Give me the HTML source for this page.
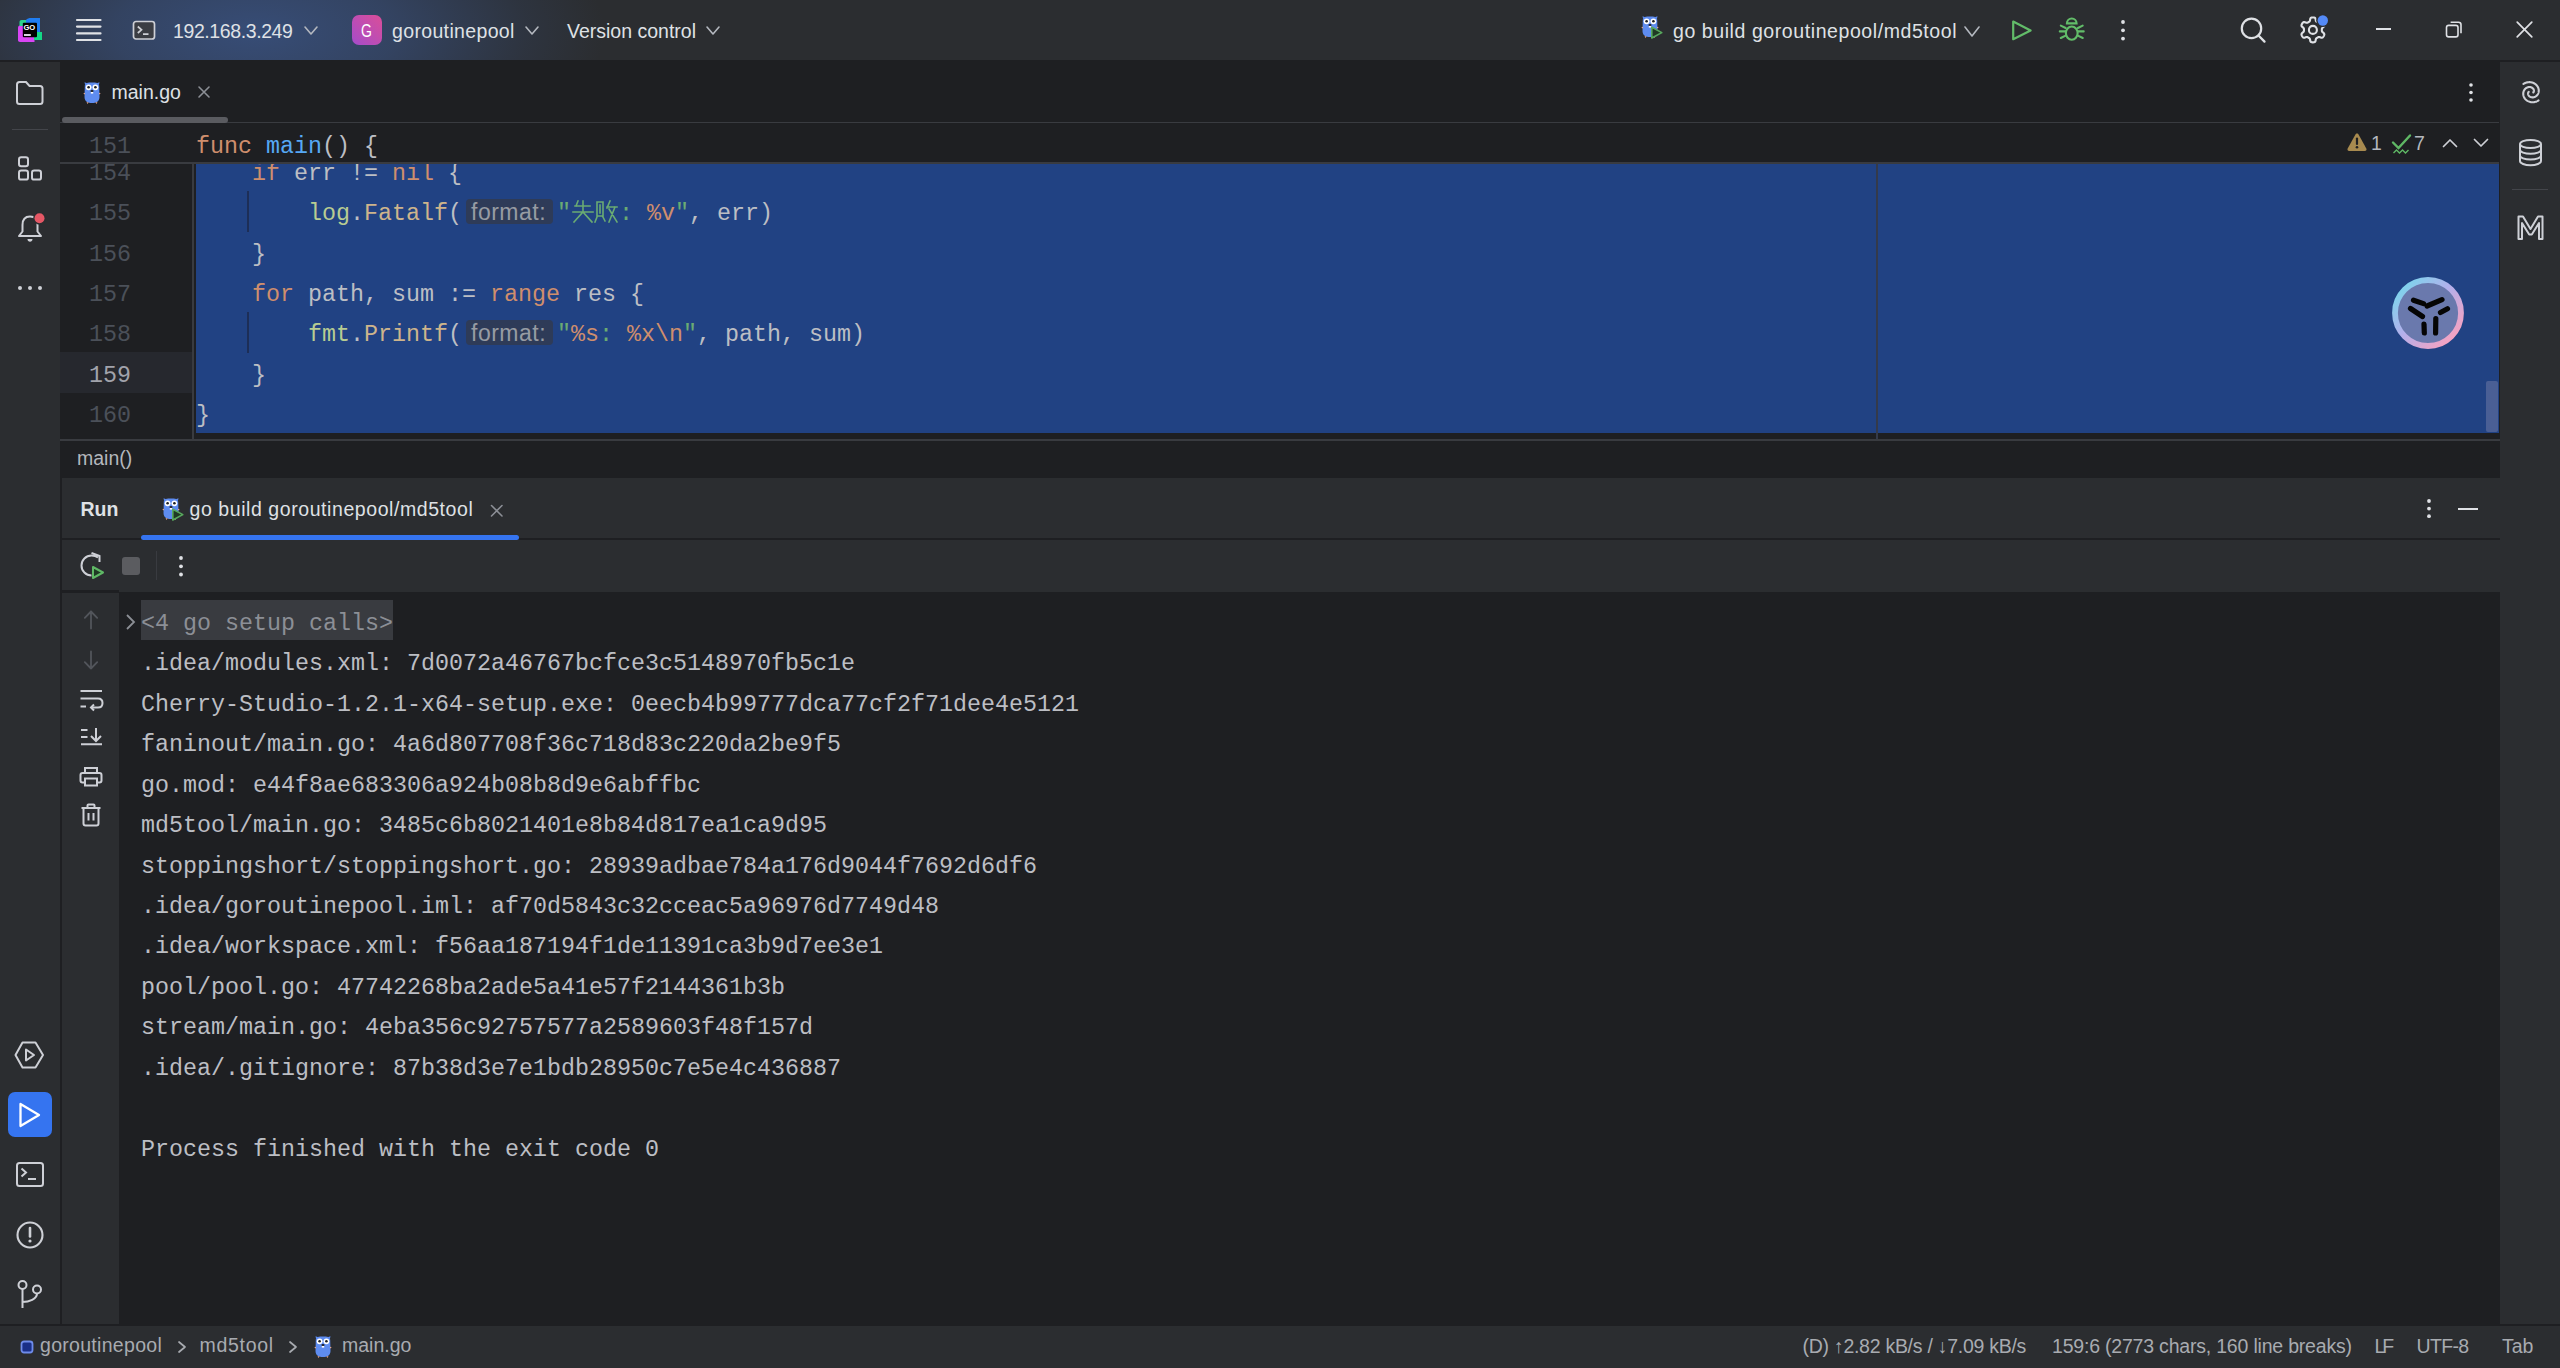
<!DOCTYPE html>
<html><head><meta charset="utf-8">
<style>
*{margin:0;padding:0;box-sizing:border-box}
html,body{width:2560px;height:1368px;overflow:hidden;background:#1E1F22}
body{position:relative;font-family:"Liberation Sans",sans-serif}
.a{position:absolute}
.t{white-space:pre}
svg.a{overflow:visible}
</style></head><body>
<div class="a" style="left:0px;top:0px;width:2560px;height:60px;background:#2B2D30;"></div>
<div class="a" style="left:0;top:0;width:2560px;height:60px;background:radial-gradient(ellipse 350px 150px at 255px 32px, rgba(57,82,130,0.86) 0%, rgba(57,82,130,0.6) 40%, rgba(57,82,130,0.18) 78%, rgba(57,82,130,0) 100%)"></div>
<div class="a" style="left:0px;top:60px;width:60px;height:1264px;background:#2B2D30;"></div>
<div class="a" style="left:2500px;top:60px;width:60px;height:1264px;background:#2B2D30;"></div>
<div class="a" style="left:60px;top:60px;width:2440px;height:1264px;background:#1E1F22;"></div>
<div class="a" style="left:0px;top:60px;width:2560px;height:1.5px;background:#1E1F22;"></div>
<div class="a" style="left:60px;top:122px;width:2439px;height:2px;background:#393B40;"></div>
<div class="a" style="left:60px;top:162px;width:2439px;height:2px;background:#393B40;"></div>
<div class="a" style="left:60px;top:439px;width:2440px;height:2px;background:#393B40;"></div>
<div class="a" style="left:60px;top:478px;width:2440px;height:846px;background:#2B2D30;"></div>
<div class="a" style="left:60px;top:538px;width:2440px;height:2px;background:#1E1F22;"></div>
<div class="a" style="left:119px;top:592px;width:2381px;height:732px;background:#1E1F22;"></div>
<div class="a" style="left:62px;top:590px;width:57px;height:3px;background:#1E1F22;"></div>
<div class="a" style="left:0px;top:1324px;width:2560px;height:2px;background:#1E1F22;"></div>
<div class="a" style="left:0px;top:1326px;width:2560px;height:42px;background:#2B2D30;"></div>
<div class="a" style="left:60px;top:352.4px;width:133px;height:40.3px;background:#26282E;"></div>
<div class="a" style="left:192px;top:164px;width:2px;height:275px;background:#393B40;"></div>
<div class="a" style="left:196px;top:164px;width:2303px;height:269px;background:#214283;"></div>
<div class="a" style="left:1876px;top:164px;width:2px;height:275px;background:#343A4A;"></div>
<div class="a" style="left:247px;top:191px;width:2px;height:41px;background:#1D2E57;"></div>
<div class="a" style="left:247px;top:312px;width:2px;height:41px;background:#1D2E57;"></div>
<div class="a t" style="left:89px;top:154.19px;font-family:'Liberation Mono',monospace;font-size:23.33px;line-height:40px;color:#4B5059;font-weight:normal;">154</div>
<div class="a t" style="left:89px;top:194.49px;font-family:'Liberation Mono',monospace;font-size:23.33px;line-height:40px;color:#4B5059;font-weight:normal;">155</div>
<div class="a t" style="left:89px;top:234.79px;font-family:'Liberation Mono',monospace;font-size:23.33px;line-height:40px;color:#4B5059;font-weight:normal;">156</div>
<div class="a t" style="left:89px;top:275.09px;font-family:'Liberation Mono',monospace;font-size:23.33px;line-height:40px;color:#4B5059;font-weight:normal;">157</div>
<div class="a t" style="left:89px;top:315.39px;font-family:'Liberation Mono',monospace;font-size:23.33px;line-height:40px;color:#4B5059;font-weight:normal;">158</div>
<div class="a t" style="left:89px;top:355.69px;font-family:'Liberation Mono',monospace;font-size:23.33px;line-height:40px;color:#A1A3AB;font-weight:normal;">159</div>
<div class="a t" style="left:89px;top:395.99px;font-family:'Liberation Mono',monospace;font-size:23.33px;line-height:40px;color:#4B5059;font-weight:normal;">160</div>
<div class="a t" style="left:252px;top:154.19px;font-family:'Liberation Mono',monospace;font-size:23.33px;line-height:40px;color:#CF8E6D;font-weight:normal;">if</div>
<div class="a t" style="left:280.0px;top:154.19px;font-family:'Liberation Mono',monospace;font-size:23.33px;line-height:40px;color:#BCBEC4;font-weight:normal;"> err != </div>
<div class="a t" style="left:392.0px;top:154.19px;font-family:'Liberation Mono',monospace;font-size:23.33px;line-height:40px;color:#CF8E6D;font-weight:normal;">nil</div>
<div class="a t" style="left:434.0px;top:154.19px;font-family:'Liberation Mono',monospace;font-size:23.33px;line-height:40px;color:#BCBEC4;font-weight:normal;"> {</div>
<div class="a t" style="left:308px;top:194.49px;font-family:'Liberation Mono',monospace;font-size:23.33px;line-height:40px;color:#B8CC92;font-weight:normal;">log</div>
<div class="a t" style="left:350.0px;top:194.49px;font-family:'Liberation Mono',monospace;font-size:23.33px;line-height:40px;color:#BCBEC4;font-weight:normal;">.</div>
<div class="a t" style="left:364.0px;top:194.49px;font-family:'Liberation Mono',monospace;font-size:23.33px;line-height:40px;color:#CDB48C;font-weight:normal;">Fatalf</div>
<div class="a t" style="left:448.0px;top:194.49px;font-family:'Liberation Mono',monospace;font-size:23.33px;line-height:40px;color:#BCBEC4;font-weight:normal;">(</div>
<div class="a" style="left:466.0px;top:198.7px;width:87px;height:25px;background:#2E3B58;border-radius:4px"></div>
<div class="a t" style="left:471.0px;top:195.63px;font-family:'Liberation Sans',sans-serif;font-size:23px;line-height:32.2px;color:#979BA3;font-weight:normal;letter-spacing:0.5px">format:</div>
<div class="a t" style="left:557.0px;top:194.49px;font-family:'Liberation Mono',monospace;font-size:23.33px;line-height:40px;color:#6AAB73;font-weight:normal;">"</div>
<div class="a" style="left:571.0px;top:198.70000000000002px;width:48px;height:28px"><svg width="48" height="28" viewBox="0 0 48 28" style="position:absolute;left:0;top:0" fill="none" stroke="#6AAB73" stroke-width="1.6" stroke-linecap="square"><path d="M7 2 L5 7 M4 7 H19 M12 2 V13 M2 13 H22 M12 13 L3 23 M12 13 L21 23"/><path d="M26 3 H32 V17 H26 Z M29 6 V14 M26 18 L24 23 M32 18 L34 22 M39 2 L36 9 M36 8 H46 M44 8 L38 23 M38 10 L46 23"/></svg></div>
<div class="a t" style="left:619.0px;top:194.49px;font-family:'Liberation Mono',monospace;font-size:23.33px;line-height:40px;color:#6AAB73;font-weight:normal;">: </div>
<div class="a t" style="left:647.0px;top:194.49px;font-family:'Liberation Mono',monospace;font-size:23.33px;line-height:40px;color:#CF8E6D;font-weight:normal;">%v</div>
<div class="a t" style="left:675.0px;top:194.49px;font-family:'Liberation Mono',monospace;font-size:23.33px;line-height:40px;color:#6AAB73;font-weight:normal;">"</div>
<div class="a t" style="left:689.0px;top:194.49px;font-family:'Liberation Mono',monospace;font-size:23.33px;line-height:40px;color:#BCBEC4;font-weight:normal;">, err)</div>
<div class="a t" style="left:252px;top:234.79px;font-family:'Liberation Mono',monospace;font-size:23.33px;line-height:40px;color:#BCBEC4;font-weight:normal;">}</div>
<div class="a t" style="left:252px;top:275.09px;font-family:'Liberation Mono',monospace;font-size:23.33px;line-height:40px;color:#CF8E6D;font-weight:normal;">for</div>
<div class="a t" style="left:294.0px;top:275.09px;font-family:'Liberation Mono',monospace;font-size:23.33px;line-height:40px;color:#BCBEC4;font-weight:normal;"> path, sum := </div>
<div class="a t" style="left:490.0px;top:275.09px;font-family:'Liberation Mono',monospace;font-size:23.33px;line-height:40px;color:#CF8E6D;font-weight:normal;">range</div>
<div class="a t" style="left:560.0px;top:275.09px;font-family:'Liberation Mono',monospace;font-size:23.33px;line-height:40px;color:#BCBEC4;font-weight:normal;"> res {</div>
<div class="a t" style="left:308px;top:315.39px;font-family:'Liberation Mono',monospace;font-size:23.33px;line-height:40px;color:#B8CC92;font-weight:normal;">fmt</div>
<div class="a t" style="left:350.0px;top:315.39px;font-family:'Liberation Mono',monospace;font-size:23.33px;line-height:40px;color:#BCBEC4;font-weight:normal;">.</div>
<div class="a t" style="left:364.0px;top:315.39px;font-family:'Liberation Mono',monospace;font-size:23.33px;line-height:40px;color:#CDB48C;font-weight:normal;">Printf</div>
<div class="a t" style="left:448.0px;top:315.39px;font-family:'Liberation Mono',monospace;font-size:23.33px;line-height:40px;color:#BCBEC4;font-weight:normal;">(</div>
<div class="a" style="left:466.0px;top:319.6px;width:87px;height:25px;background:#2E3B58;border-radius:4px"></div>
<div class="a t" style="left:471.0px;top:316.53px;font-family:'Liberation Sans',sans-serif;font-size:23px;line-height:32.2px;color:#979BA3;font-weight:normal;letter-spacing:0.5px">format:</div>
<div class="a t" style="left:557.0px;top:315.39px;font-family:'Liberation Mono',monospace;font-size:23.33px;line-height:40px;color:#6AAB73;font-weight:normal;">"</div>
<div class="a t" style="left:571.0px;top:315.39px;font-family:'Liberation Mono',monospace;font-size:23.33px;line-height:40px;color:#CF8E6D;font-weight:normal;">%s</div>
<div class="a t" style="left:599.0px;top:315.39px;font-family:'Liberation Mono',monospace;font-size:23.33px;line-height:40px;color:#6AAB73;font-weight:normal;">: </div>
<div class="a t" style="left:627.0px;top:315.39px;font-family:'Liberation Mono',monospace;font-size:23.33px;line-height:40px;color:#CF8E6D;font-weight:normal;">%x</div>
<div class="a t" style="left:655.0px;top:315.39px;font-family:'Liberation Mono',monospace;font-size:23.33px;line-height:40px;color:#CF8E6D;font-weight:normal;">\n</div>
<div class="a t" style="left:683.0px;top:315.39px;font-family:'Liberation Mono',monospace;font-size:23.33px;line-height:40px;color:#6AAB73;font-weight:normal;">"</div>
<div class="a t" style="left:697.0px;top:315.39px;font-family:'Liberation Mono',monospace;font-size:23.33px;line-height:40px;color:#BCBEC4;font-weight:normal;">, path, sum)</div>
<div class="a t" style="left:252px;top:355.69px;font-family:'Liberation Mono',monospace;font-size:23.33px;line-height:40px;color:#BCBEC4;font-weight:normal;">}</div>
<div class="a t" style="left:196px;top:395.99px;font-family:'Liberation Mono',monospace;font-size:23.33px;line-height:40px;color:#BCBEC4;font-weight:normal;">}</div>
<div class="a" style="left:60px;top:123px;width:2439px;height:39px;background:#1E1F22;"></div>
<div class="a" style="left:60px;top:162px;width:2439px;height:2px;background:#393B40;"></div>
<div class="a t" style="left:89px;top:126.59px;font-family:'Liberation Mono',monospace;font-size:23.33px;line-height:40px;color:#4B5059;font-weight:normal;">151</div>
<div class="a t" style="left:196px;top:126.59px;font-family:'Liberation Mono',monospace;font-size:23.33px;line-height:40px;color:#CF8E6D;font-weight:normal;">func</div>
<div class="a t" style="left:252.0px;top:126.59px;font-family:'Liberation Mono',monospace;font-size:23.33px;line-height:40px;color:#BCBEC4;font-weight:normal;"> </div>
<div class="a t" style="left:266.0px;top:126.59px;font-family:'Liberation Mono',monospace;font-size:23.33px;line-height:40px;color:#56A8F5;font-weight:normal;">main</div>
<div class="a t" style="left:322.0px;top:126.59px;font-family:'Liberation Mono',monospace;font-size:23.33px;line-height:40px;color:#BCBEC4;font-weight:normal;">() {</div>
<div class="a" style="left:141px;top:600px;width:252px;height:40px;background:#393B40;"></div>
<div class="a t" style="left:141px;top:603.89px;font-family:'Liberation Mono',monospace;font-size:23.33px;line-height:40px;color:#8C8F96;font-weight:normal;">&lt;4 go setup calls&gt;</div>
<svg class="a" style="left:124px;top:612px;" width="14" height="20" viewBox="0 0 14 20"><path d="M3 3 L10 10 L3 17" stroke="#8C8F96" stroke-width="1.8" fill="none"/></svg>
<div class="a t" style="left:141px;top:644.33px;font-family:'Liberation Mono',monospace;font-size:23.33px;line-height:40px;color:#BCBEC4;font-weight:normal;">.idea/modules.xml: 7d0072a46767bcfce3c5148970fb5c1e</div>
<div class="a t" style="left:141px;top:684.77px;font-family:'Liberation Mono',monospace;font-size:23.33px;line-height:40px;color:#BCBEC4;font-weight:normal;">Cherry-Studio-1.2.1-x64-setup.exe: 0eecb4b99777dca77cf2f71dee4e5121</div>
<div class="a t" style="left:141px;top:725.21px;font-family:'Liberation Mono',monospace;font-size:23.33px;line-height:40px;color:#BCBEC4;font-weight:normal;">faninout/main.go: 4a6d807708f36c718d83c220da2be9f5</div>
<div class="a t" style="left:141px;top:765.65px;font-family:'Liberation Mono',monospace;font-size:23.33px;line-height:40px;color:#BCBEC4;font-weight:normal;">go.mod: e44f8ae683306a924b08b8d9e6abffbc</div>
<div class="a t" style="left:141px;top:806.09px;font-family:'Liberation Mono',monospace;font-size:23.33px;line-height:40px;color:#BCBEC4;font-weight:normal;">md5tool/main.go: 3485c6b8021401e8b84d817ea1ca9d95</div>
<div class="a t" style="left:141px;top:846.53px;font-family:'Liberation Mono',monospace;font-size:23.33px;line-height:40px;color:#BCBEC4;font-weight:normal;">stoppingshort/stoppingshort.go: 28939adbae784a176d9044f7692d6df6</div>
<div class="a t" style="left:141px;top:886.97px;font-family:'Liberation Mono',monospace;font-size:23.33px;line-height:40px;color:#BCBEC4;font-weight:normal;">.idea/goroutinepool.iml: af70d5843c32cceac5a96976d7749d48</div>
<div class="a t" style="left:141px;top:927.41px;font-family:'Liberation Mono',monospace;font-size:23.33px;line-height:40px;color:#BCBEC4;font-weight:normal;">.idea/workspace.xml: f56aa187194f1de11391ca3b9d7ee3e1</div>
<div class="a t" style="left:141px;top:967.85px;font-family:'Liberation Mono',monospace;font-size:23.33px;line-height:40px;color:#BCBEC4;font-weight:normal;">pool/pool.go: 47742268ba2ade5a41e57f2144361b3b</div>
<div class="a t" style="left:141px;top:1008.29px;font-family:'Liberation Mono',monospace;font-size:23.33px;line-height:40px;color:#BCBEC4;font-weight:normal;">stream/main.go: 4eba356c92757577a2589603f48f157d</div>
<div class="a t" style="left:141px;top:1048.73px;font-family:'Liberation Mono',monospace;font-size:23.33px;line-height:40px;color:#BCBEC4;font-weight:normal;">.idea/.gitignore: 87b38d3e7e1bdb28950c7e5e4c436887</div>
<div class="a t" style="left:141px;top:1129.61px;font-family:'Liberation Mono',monospace;font-size:23.33px;line-height:40px;color:#BCBEC4;font-weight:normal;">Process finished with the exit code 0</div>
<svg class="a" style="left:0px;top:0px;" width="50" height="50" viewBox="0 0 50 50"><path d="M18 28 C18 26.3 19 25.3 20.5 25.3 H34.5 V42 H20 C18.8 42 18 41.2 18 40 Z" fill="#D945F5"/><path d="M19.5 22 C19.5 20.8 20.3 20 21.5 20 H27 V26 H19.5 Z" fill="#2BD38F"/><path d="M27 19 L29.5 18 H40 V32 H26 V20 Z" fill="#1F7DF2"/><path d="M34 32 H42 V40 H34 Z" fill="#14D886"/><rect x="22.8" y="22.8" width="14.2" height="14.4" rx="1" fill="#000"/><text x="23.6" y="30" font-family="Liberation Sans" font-weight="bold" font-size="7.6" fill="#fff" letter-spacing="-0.3">GO</text><rect x="24" y="34" width="6.8" height="2" fill="#D8D0E0"/></svg>
<svg class="a" style="left:76px;top:18px;" width="26" height="24" viewBox="0 0 26 24"><path d="M1 2 H24.5 M1 8.6 H24.5 M1 15.4 H24.5 M1 22 H24.5" stroke="#DFE1E5" stroke-width="2.2" stroke-linecap="round"/></svg>
<svg class="a" style="left:132px;top:20px;" width="24" height="21" viewBox="0 0 24 21"><rect x="1.5" y="1.5" width="21" height="17.5" rx="2.5" fill="#3B3D43" stroke="#CED0D6" stroke-width="1.7"/><path d="M5.8 6.5 L9.5 9.8 L5.8 13 M11 14.2 H16.5" fill="none" stroke="#CED0D6" stroke-width="1.7"/></svg>
<div class="a t" style="left:173px;top:17.59px;font-family:'Liberation Sans',sans-serif;font-size:19.5px;line-height:27.3px;color:#DFE1E5;font-weight:normal;letter-spacing:-0.4px">192.168.3.249</div>
<svg class="a" style="left:304px;top:26px;" width="14" height="9" viewBox="0 0 14 9"><path d="M1 1 L7.0 8.0 L13.0 1" fill="none" stroke="#B4B8BF" stroke-width="1.6" stroke-linecap="round" stroke-linejoin="round"/></svg>
<div class="a" style="left:352px;top:15px;width:30px;height:30px;border-radius:7px;background:linear-gradient(45deg,#A54CCB,#DA4E98)"></div>
<div class="a t" style="left:360.5px;top:18.56px;font-family:'Liberation Sans',sans-serif;font-size:18px;line-height:25.2px;color:#FFFFFF;font-weight:normal;transform:scaleX(0.78);transform-origin:0 0">G</div>
<div class="a t" style="left:392px;top:17.59px;font-family:'Liberation Sans',sans-serif;font-size:19.5px;line-height:27.3px;color:#DFE1E5;font-weight:normal;letter-spacing:0.35px">goroutinepool</div>
<svg class="a" style="left:525px;top:26px;" width="14" height="9" viewBox="0 0 14 9"><path d="M1 1 L7.0 8.0 L13.0 1" fill="none" stroke="#B4B8BF" stroke-width="1.6" stroke-linecap="round" stroke-linejoin="round"/></svg>
<div class="a t" style="left:567px;top:17.59px;font-family:'Liberation Sans',sans-serif;font-size:19.5px;line-height:27.3px;color:#DFE1E5;font-weight:normal;">Version control</div>
<svg class="a" style="left:706px;top:26px;" width="14" height="9" viewBox="0 0 14 9"><path d="M1 1 L7.0 8.0 L13.0 1" fill="none" stroke="#B4B8BF" stroke-width="1.6" stroke-linecap="round" stroke-linejoin="round"/></svg>
<svg class="a" style="left:1640px;top:15px;" width="30" height="30" viewBox="0 0 30 30"><g transform="scale(1.0)"><path d="M3 3.5 L2.5 1.2 L6 2.6 Z M17 3.5 L17.5 1.2 L14 2.6 Z" fill="#5E8CF0"/><path d="M2.8 5 C2.8 1.8 6 1.5 10 1.5 C14 1.5 17.2 1.8 17.2 5 L17.5 16 C17.5 20.5 14 22 10 22 C6 22 2.5 20.5 2.5 16 Z" fill="#5E8CF0"/><circle cx="6.6" cy="6.3" r="2.9" fill="#fff"/><circle cx="13.4" cy="6.3" r="2.9" fill="#fff"/><circle cx="6.6" cy="6.3" r="1.3" fill="#1E1F22"/><circle cx="13.4" cy="6.3" r="1.3" fill="#1E1F22"/><ellipse cx="10" cy="10" rx="1.6" ry="1.1" fill="#1E1F22"/><path d="M8.8 11 H11.2 V12.6 H8.8Z" fill="#fff"/><path d="M1.2 12.5 L3 11.8 L3 13.6Z M18.8 12.5 L17 11.8 L17 13.6Z M4.5 21.5 L6.5 21 L5.8 23Z M15.5 21.5 L13.5 21 L14.2 23Z" fill="#E8A88F"/></g><path d="M11.8 12.2 L21.8 17.6 L11.8 23.0 Z" fill="#1F3A24" stroke="#58A85E" stroke-width="1.6" stroke-linejoin="round"/></svg>
<div class="a t" style="left:1673px;top:17.79px;font-family:'Liberation Sans',sans-serif;font-size:19.5px;line-height:27.3px;color:#DFE1E5;font-weight:normal;letter-spacing:0.58px">go build goroutinepool/md5tool</div>
<svg class="a" style="left:1964px;top:26px;" width="16" height="11" viewBox="0 0 16 11"><path d="M1 1 L8.0 10.0 L15.0 1" fill="none" stroke="#B4B8BF" stroke-width="1.6" stroke-linecap="round" stroke-linejoin="round"/></svg>
<svg class="a" style="left:2010px;top:19px;" width="24" height="24" viewBox="0 0 24 24"><path d="M3.2 2.6 L20.6 11.4 L3.2 20.2 Z" fill="none" stroke="#62BC69" stroke-width="2.2" stroke-linejoin="round"/></svg>
<svg class="a" style="left:2057px;top:17px;" width="30" height="26" viewBox="0 0 30 26"><g fill="none" stroke="#62BC69" stroke-width="2.1" stroke-linecap="round"><path d="M9.9 6.4 A4.85 4.85 0 0 1 19.6 6.4 Z"/><ellipse cx="14.75" cy="16.1" rx="5.9" ry="6.6"/><path d="M3.8 8.6 L8.6 11 M2.8 14.4 H8.5 M3.8 21 L8.6 18.6 M25.7 8.6 L20.9 11 M26.7 14.4 H21 M25.7 21 L20.9 18.6"/></g></svg>
<svg class="a" style="left:2116.5px;top:17.7px;" width="12" height="24.599999999999998" viewBox="0 0 12 24.599999999999998"><circle cx="6" cy="4.0" r="1.9" fill="#DFE1E5"/><circle cx="6" cy="12.3" r="1.9" fill="#DFE1E5"/><circle cx="6" cy="20.6" r="1.9" fill="#DFE1E5"/></svg>
<svg class="a" style="left:2238px;top:16px;" width="32" height="30" viewBox="0 0 32 30"><circle cx="13.5" cy="12.4" r="9.7" fill="none" stroke="#DFE1E5" stroke-width="2.2"/><path d="M20.5 19.5 L26.5 25.6" stroke="#DFE1E5" stroke-width="2.3" stroke-linecap="round"/></svg>
<svg class="a" style="left:2297px;top:15px;" width="34" height="32" viewBox="0 0 34 32"><path d="M15.90 2.45 L16.33 2.46 L16.77 2.50 L17.20 2.57 L17.61 2.71 L18.01 2.95 L18.35 3.40 L18.59 4.12 L18.74 5.00 L18.88 5.73 L19.07 6.19 L19.30 6.48 L19.56 6.67 L19.83 6.84 L20.10 6.99 L20.38 7.15 L20.65 7.31 L20.92 7.46 L21.19 7.61 L21.49 7.74 L21.85 7.80 L22.35 7.74 L23.05 7.49 L23.89 7.19 L24.64 7.03 L25.20 7.10 L25.60 7.32 L25.93 7.61 L26.21 7.95 L26.45 8.30 L26.68 8.68 L26.89 9.06 L27.07 9.45 L27.22 9.86 L27.32 10.29 L27.30 10.75 L27.09 11.27 L26.58 11.84 L25.89 12.41 L25.33 12.90 L25.02 13.29 L24.90 13.64 L24.86 13.96 L24.85 14.27 L24.85 14.59 L24.85 14.90 L24.85 15.21 L24.85 15.53 L24.86 15.84 L24.90 16.16 L25.02 16.51 L25.33 16.90 L25.89 17.39 L26.58 17.96 L27.09 18.53 L27.30 19.05 L27.32 19.51 L27.22 19.94 L27.07 20.35 L26.89 20.74 L26.68 21.12 L26.45 21.50 L26.21 21.85 L25.93 22.19 L25.60 22.48 L25.20 22.70 L24.64 22.77 L23.89 22.61 L23.05 22.31 L22.35 22.06 L21.85 22.00 L21.49 22.06 L21.19 22.19 L20.92 22.34 L20.65 22.49 L20.38 22.65 L20.10 22.81 L19.83 22.96 L19.56 23.13 L19.30 23.32 L19.07 23.61 L18.88 24.07 L18.74 24.80 L18.59 25.68 L18.35 26.40 L18.01 26.85 L17.61 27.09 L17.20 27.23 L16.77 27.30 L16.33 27.34 L15.90 27.35 L15.47 27.34 L15.03 27.30 L14.60 27.23 L14.19 27.09 L13.79 26.85 L13.45 26.40 L13.21 25.68 L13.06 24.80 L12.92 24.07 L12.73 23.61 L12.50 23.32 L12.24 23.13 L11.97 22.96 L11.70 22.81 L11.42 22.65 L11.15 22.49 L10.88 22.34 L10.61 22.19 L10.31 22.06 L9.95 22.00 L9.45 22.06 L8.75 22.31 L7.91 22.61 L7.16 22.77 L6.60 22.70 L6.20 22.48 L5.87 22.19 L5.59 21.85 L5.35 21.50 L5.12 21.13 L4.91 20.74 L4.73 20.35 L4.58 19.94 L4.48 19.51 L4.50 19.05 L4.71 18.53 L5.22 17.96 L5.91 17.39 L6.47 16.90 L6.78 16.51 L6.90 16.16 L6.94 15.84 L6.95 15.53 L6.95 15.21 L6.95 14.90 L6.95 14.59 L6.95 14.27 L6.94 13.96 L6.90 13.64 L6.78 13.29 L6.47 12.90 L5.91 12.41 L5.22 11.84 L4.71 11.27 L4.50 10.75 L4.48 10.29 L4.58 9.86 L4.73 9.45 L4.91 9.06 L5.12 8.67 L5.35 8.30 L5.59 7.95 L5.87 7.61 L6.20 7.32 L6.60 7.10 L7.16 7.03 L7.91 7.19 L8.75 7.49 L9.45 7.74 L9.95 7.80 L10.31 7.74 L10.61 7.61 L10.88 7.46 L11.15 7.31 L11.42 7.15 L11.70 6.99 L11.97 6.84 L12.24 6.67 L12.50 6.48 L12.73 6.19 L12.92 5.73 L13.06 5.00 L13.21 4.12 L13.45 3.40 L13.79 2.95 L14.19 2.71 L14.60 2.57 L15.03 2.50 L15.47 2.46Z" fill="none" stroke="#DFE1E5" stroke-width="2.1" stroke-linejoin="round"/><circle cx="15.9" cy="14.9" r="4" fill="none" stroke="#DFE1E5" stroke-width="2.1"/><circle cx="25.8" cy="5.5" r="6.6" fill="#2B2D30"/><circle cx="25.8" cy="5.5" r="5.2" fill="#548AF7"/></svg>
<div class="a" style="left:2376px;top:27.9px;width:15px;height:1.7px;background:#DFE1E5;"></div>
<svg class="a" style="left:2444px;top:20px;" width="20" height="20" viewBox="0 0 20 20"><rect x="2.5" y="5.4" width="11.5" height="11.5" rx="2.2" fill="none" stroke="#DFE1E5" stroke-width="1.6"/><path d="M6.6 2.3 H14.5 C16 2.3 17 3.3 17 4.8 V13.2" fill="none" stroke="#DFE1E5" stroke-width="1.6"/></svg>
<svg class="a" style="left:2514px;top:19px;" width="22" height="22" viewBox="0 0 22 22"><path d="M3.2 3.2 L17.8 17.8 M17.8 3.2 L3.2 17.8" stroke="#DFE1E5" stroke-width="1.7" stroke-linecap="round"/></svg>
<svg class="a" style="left:82px;top:81px;" width="30" height="30" viewBox="0 0 30 30"><g transform="scale(1.0)"><path d="M3 3.5 L2.5 1.2 L6 2.6 Z M17 3.5 L17.5 1.2 L14 2.6 Z" fill="#5E8CF0"/><path d="M2.8 5 C2.8 1.8 6 1.5 10 1.5 C14 1.5 17.2 1.8 17.2 5 L17.5 16 C17.5 20.5 14 22 10 22 C6 22 2.5 20.5 2.5 16 Z" fill="#5E8CF0"/><circle cx="6.6" cy="6.3" r="2.9" fill="#fff"/><circle cx="13.4" cy="6.3" r="2.9" fill="#fff"/><circle cx="6.6" cy="6.3" r="1.3" fill="#1E1F22"/><circle cx="13.4" cy="6.3" r="1.3" fill="#1E1F22"/><ellipse cx="10" cy="10" rx="1.6" ry="1.1" fill="#1E1F22"/><path d="M8.8 11 H11.2 V12.6 H8.8Z" fill="#fff"/><path d="M1.2 12.5 L3 11.8 L3 13.6Z M18.8 12.5 L17 11.8 L17 13.6Z M4.5 21.5 L6.5 21 L5.8 23Z M15.5 21.5 L13.5 21 L14.2 23Z" fill="#E8A88F"/></g></svg>
<div class="a t" style="left:111.5px;top:78.59px;font-family:'Liberation Sans',sans-serif;font-size:19.5px;line-height:27.3px;color:#DFE1E5;font-weight:normal;">main.go</div>
<svg class="a" style="left:197px;top:85px;" width="14" height="14" viewBox="0 0 14 14"><path d="M2 2 L12 12 M12 2 L2 12" stroke="#8C8F96" stroke-width="1.6" stroke-linecap="round"/></svg>
<div class="a" style="left:62px;top:117px;width:166px;height:6px;background:#5A5B60;border-radius:3px"></div>
<svg class="a" style="left:2465px;top:80.5px;" width="12" height="23.0" viewBox="0 0 12 23.0"><circle cx="6" cy="4.0" r="1.8" fill="#DFE1E5"/><circle cx="6" cy="11.5" r="1.8" fill="#DFE1E5"/><circle cx="6" cy="19.0" r="1.8" fill="#DFE1E5"/></svg>
<svg class="a" style="left:2347px;top:132px;" width="22" height="20" viewBox="0 0 22 20"><path d="M10 1.5 C10.8 1.5 11.3 2 11.7 2.7 L19.3 16.5 C20 17.8 19.2 19 17.8 19 H2.2 C0.8 19 0 17.8 0.7 16.5 L8.3 2.7 C8.7 2 9.2 1.5 10 1.5Z" fill="#A88A4F"/><path d="M10 6.5 V12" stroke="#1E1F22" stroke-width="2.2" stroke-linecap="round"/><circle cx="10" cy="15.3" r="1.3" fill="#1E1F22"/></svg>
<div class="a t" style="left:2371px;top:130.09px;font-family:'Liberation Sans',sans-serif;font-size:19.5px;line-height:27.3px;color:#B4B8BF;font-weight:normal;">1</div>
<svg class="a" style="left:2391px;top:133px;" width="24" height="22" viewBox="0 0 24 22"><path d="M2 9.5 L7.5 15 L19 2.5" fill="none" stroke="#5FB865" stroke-width="2.4" stroke-linecap="round"/><path d="M2.5 20 L5.5 17 L8.5 20 L11.5 17 L14.5 20 L17.5 17" fill="none" stroke="#5FB865" stroke-width="1.4"/></svg>
<div class="a t" style="left:2414px;top:130.09px;font-family:'Liberation Sans',sans-serif;font-size:19.5px;line-height:27.3px;color:#B4B8BF;font-weight:normal;">7</div>
<svg class="a" style="left:2442px;top:138px;" width="16" height="10" viewBox="0 0 16 10"><path d="M1.5 8.5 L8 2 L14.5 8.5" fill="none" stroke="#CED0D6" stroke-width="1.7" stroke-linecap="round" stroke-linejoin="round"/></svg>
<svg class="a" style="left:2473px;top:138px;" width="16" height="10" viewBox="0 0 16 10"><path d="M1.5 1.5 L8 8 L14.5 1.5" fill="none" stroke="#CED0D6" stroke-width="1.7" stroke-linecap="round" stroke-linejoin="round"/></svg>
<div class="a" style="left:2486px;top:381px;width:12px;height:51px;background:#4A5F95;border-radius:2px"></div>
<svg class="a" style="left:2390px;top:275px;" width="76" height="76" viewBox="0 0 76 76"><defs><linearGradient id="aig" x1="0.1" y1="0.1" x2="0.9" y2="0.9"><stop offset="0" stop-color="#7ED3EC"/><stop offset="0.45" stop-color="#B3B0EC"/><stop offset="1" stop-color="#F7A2C0"/></linearGradient></defs><circle cx="38" cy="38" r="33" fill="#6A79AD" stroke="url(#aig)" stroke-width="5.8"/><g stroke="#050505" stroke-width="5.2" stroke-linecap="round" fill="none"><path d="M23.5 25.2 L33.5 28.6"/><path d="M37 31 L52 24.6"/><path d="M20.5 33.5 L32.5 41.5"/><path d="M50.5 37.5 L57.5 33.8"/><path d="M34 49 L34.3 58"/><path d="M45.8 43.5 L45.6 58"/></g></svg>
<svg class="a" style="left:15px;top:80px;" width="30" height="26" viewBox="0 0 30 26"><path d="M2 4.5 C2 3 3 2 4.5 2 H11 L14.5 6 H25 C26.5 6 27.5 7 27.5 8.5 V21.5 C27.5 23 26.5 24 25 24 H4.5 C3 24 2 23 2 21.5 Z" fill="none" stroke="#CED0D6" stroke-width="2"/></svg>
<div class="a" style="left:12px;top:129px;width:36px;height:1.2px;background:#43454A;"></div>
<svg class="a" style="left:16px;top:153px;" width="28" height="30" viewBox="0 0 28 30"><g fill="none" stroke="#CED0D6" stroke-width="2"><rect x="3" y="4.2" width="9" height="9" rx="2.2"/><rect x="3" y="17.6" width="9" height="9" rx="2.2"/><rect x="16" y="17.6" width="9" height="9" rx="2.2"/></g></svg>
<svg class="a" style="left:15px;top:211px;" width="30" height="34" viewBox="0 0 30 34"><path d="M15 5.5 C9.5 5.5 7.5 9.5 7.5 14 V20.5 L4 25 H26 L22.5 20.5 V14 C22.5 9.5 20.5 5.5 15 5.5 Z " fill="none" stroke="#CED0D6" stroke-width="2" stroke-linejoin="round"/><path d="M12.5 28 H17.5 C17.5 29.8 16.4 30.8 15 30.8 C13.6 30.8 12.5 29.8 12.5 28Z" fill="#CED0D6"/><circle cx="24.5" cy="7.2" r="6.3" fill="#2B2D30"/><circle cx="24.5" cy="7.2" r="5" fill="#E55765"/></svg>
<svg class="a" style="left:16px;top:282px;" width="28" height="12" viewBox="0 0 28 12"><circle cx="4.0" cy="6" r="2" fill="#CED0D6"/><circle cx="14.0" cy="6" r="2" fill="#CED0D6"/><circle cx="24.0" cy="6" r="2" fill="#CED0D6"/></svg>
<svg class="a" style="left:14px;top:1040px;" width="32" height="30" viewBox="0 0 32 30"><path d="M8.5 2.5 H21.5 L29 15 L21.5 27.5 H8.5 L1.5 15 Z" fill="none" stroke="#CED0D6" stroke-width="2" stroke-linejoin="round"/><path d="M12 9.5 L20 15 L12 20.5 Z" fill="none" stroke="#CED0D6" stroke-width="2" stroke-linejoin="round"/></svg>
<div class="a" style="left:8px;top:1092px;width:44px;height:45px;background:#3574F0;border-radius:7px"></div>
<svg class="a" style="left:17px;top:1101px;" width="26" height="28" viewBox="0 0 26 28"><path d="M3.5 3 L22 14 L3.5 25 Z" fill="none" stroke="#FFFFFF" stroke-width="2.3" stroke-linejoin="round"/></svg>
<svg class="a" style="left:15px;top:1161px;" width="30" height="28" viewBox="0 0 30 28"><rect x="2" y="2" width="26" height="23" rx="2.5" fill="none" stroke="#CED0D6" stroke-width="2"/><path d="M6.5 7.5 L11 11.5 L6.5 15.5 M13 18 H21" fill="none" stroke="#CED0D6" stroke-width="2"/></svg>
<svg class="a" style="left:15px;top:1220px;" width="30" height="30" viewBox="0 0 30 30"><circle cx="15" cy="15" r="12.5" fill="none" stroke="#CED0D6" stroke-width="2.1"/><path d="M15 8 V16.5" stroke="#CED0D6" stroke-width="2.6" stroke-linecap="round"/><circle cx="15" cy="21" r="1.6" fill="#CED0D6"/></svg>
<svg class="a" style="left:15px;top:1279px;" width="30" height="32" viewBox="0 0 30 32"><g fill="none" stroke="#CED0D6" stroke-width="2"><circle cx="7.5" cy="6" r="4"/><circle cx="22" cy="10.5" r="4"/><path d="M7.5 10 V29 M7.5 23 C14 23 22 20 22 14.5"/></g></svg>
<svg class="a" style="left:2516px;top:78px;" width="30" height="28" viewBox="0 0 30 28"><path d="M7.44 5.97 L8.04 5.60 L8.65 5.28 L9.28 4.99 L9.92 4.75 L10.57 4.55 L11.22 4.39 L11.88 4.27 L12.54 4.20 L13.19 4.16 L13.84 4.17 L14.49 4.22 L15.12 4.30 L15.74 4.43 L16.34 4.59 L16.93 4.78 L17.49 5.01 L18.04 5.28 L18.56 5.57 L19.06 5.89 L19.52 6.24 L19.97 6.61 L20.38 7.01 L20.76 7.42 L21.11 7.86 L21.42 8.31 L21.71 8.77 L21.96 9.25 L22.17 9.73 L22.35 10.22 L22.50 10.72 L22.61 11.22 L22.69 11.72 L22.74 12.21 L22.75 12.71 L22.73 13.19 L22.68 13.67 L22.60 14.14 L22.49 14.60 L22.35 15.04 L22.18 15.47 L21.99 15.88 L21.78 16.27 L21.54 16.65 L21.28 17.00 L21.00 17.33 L20.71 17.64 L20.40 17.92 L20.08 18.18 L19.74 18.41 L19.39 18.62 L19.04 18.81 L18.68 18.97 L18.32 19.10 L17.95 19.21 L17.58 19.29 L17.22 19.35 L16.85 19.38 L16.50 19.39 L16.14 19.37 L15.80 19.33 L15.46 19.28 L15.14 19.20 L14.83 19.10 L14.53 18.98 L14.24 18.84 L13.97 18.69 L13.71 18.53 L13.48 18.35 L13.26 18.16 L13.06 17.96 L12.87 17.75 L12.71 17.53 L12.56 17.31 L12.44 17.08 L12.33 16.85 L12.24 16.62 L12.17 16.38 L12.12 16.15 L12.09 15.92 L12.07 15.70 L12.08 15.48 L12.10 15.26 L12.13 15.05 L12.18 14.86 L12.24 14.67 L12.32 14.49 L12.40 14.32 L12.50 14.16 L12.61 14.02 L12.72 13.89M22.56 22.43 L21.96 22.80 L21.35 23.12 L20.72 23.41 L20.08 23.65 L19.43 23.85 L18.78 24.01 L18.12 24.13 L17.46 24.20 L16.81 24.24 L16.16 24.23 L15.51 24.18 L14.88 24.10 L14.26 23.97 L13.66 23.81 L13.07 23.62 L12.51 23.39 L11.96 23.12 L11.44 22.83 L10.94 22.51 L10.48 22.16 L10.03 21.79 L9.62 21.39 L9.24 20.98 L8.89 20.54 L8.58 20.09 L8.29 19.63 L8.04 19.15 L7.83 18.67 L7.65 18.18 L7.50 17.68 L7.39 17.18 L7.31 16.68 L7.26 16.19 L7.25 15.69 L7.27 15.21 L7.32 14.73 L7.40 14.26 L7.51 13.80 L7.65 13.36 L7.82 12.93 L8.01 12.52 L8.22 12.13 L8.46 11.75 L8.72 11.40 L9.00 11.07 L9.29 10.76 L9.60 10.48 L9.92 10.22 L10.26 9.99 L10.61 9.78 L10.96 9.59 L11.32 9.43 L11.68 9.30 L12.05 9.19 L12.42 9.11 L12.78 9.05 L13.15 9.02 L13.50 9.01 L13.86 9.03 L14.20 9.07 L14.54 9.12 L14.86 9.20 L15.17 9.30 L15.47 9.42 L15.76 9.56 L16.03 9.71 L16.29 9.87 L16.52 10.05 L16.74 10.24 L16.94 10.44 L17.13 10.65 L17.29 10.87 L17.44 11.09 L17.56 11.32 L17.67 11.55 L17.76 11.78 L17.83 12.02 L17.88 12.25 L17.91 12.48 L17.93 12.70 L17.92 12.92 L17.90 13.14 L17.87 13.35 L17.82 13.54 L17.76 13.73 L17.68 13.91 L17.60 14.08 L17.50 14.24 L17.39 14.38 L17.28 14.51" fill="none" stroke="#CED0D6" stroke-width="2.1" stroke-linecap="round" stroke-linejoin="round"/></svg>
<svg class="a" style="left:2516px;top:137px;" width="30" height="32" viewBox="0 0 30 32"><g fill="none" stroke="#CED0D6" stroke-width="2"><ellipse cx="14.5" cy="7" rx="10.5" ry="4"/><path d="M4 7 V24 C4 26.3 8.7 28.2 14.5 28.2 C20.3 28.2 25 26.3 25 24 V7 M4 12.7 C4 15 8.7 16.8 14.5 16.8 C20.3 16.8 25 15 25 12.7 M4 18.4 C4 20.7 8.7 22.5 14.5 22.5 C20.3 22.5 25 20.7 25 18.4"/></g></svg>
<div class="a" style="left:2512px;top:189px;width:36px;height:1.2px;background:#43454A;"></div>
<svg class="a" style="left:2515px;top:213px;" width="32" height="30" viewBox="0 0 32 30"><path d="M3.5 26 V3.5 H8 L15.5 16 L23 3.5 H27.5 V26 H24 V10 L16.8 21.5 H14.2 L7 10 V26 Z" fill="none" stroke="#CED0D6" stroke-width="2" stroke-linejoin="round"/></svg>
<div class="a t" style="left:77px;top:444.59px;font-family:'Liberation Sans',sans-serif;font-size:19.5px;line-height:27.3px;color:#B4B7BD;font-weight:normal;">main()</div>
<div class="a" style="left:60px;top:478px;width:2px;height:846px;background:#1E1F22;"></div>
<div class="a t" style="left:80.5px;top:495.59px;font-family:'Liberation Sans',sans-serif;font-size:19.5px;line-height:27.3px;color:#DFE1E5;font-weight:bold;">Run</div>
<svg class="a" style="left:161px;top:497px;" width="30" height="30" viewBox="0 0 30 30"><g transform="scale(1.0)"><path d="M3 3.5 L2.5 1.2 L6 2.6 Z M17 3.5 L17.5 1.2 L14 2.6 Z" fill="#5E8CF0"/><path d="M2.8 5 C2.8 1.8 6 1.5 10 1.5 C14 1.5 17.2 1.8 17.2 5 L17.5 16 C17.5 20.5 14 22 10 22 C6 22 2.5 20.5 2.5 16 Z" fill="#5E8CF0"/><circle cx="6.6" cy="6.3" r="2.9" fill="#fff"/><circle cx="13.4" cy="6.3" r="2.9" fill="#fff"/><circle cx="6.6" cy="6.3" r="1.3" fill="#1E1F22"/><circle cx="13.4" cy="6.3" r="1.3" fill="#1E1F22"/><ellipse cx="10" cy="10" rx="1.6" ry="1.1" fill="#1E1F22"/><path d="M8.8 11 H11.2 V12.6 H8.8Z" fill="#fff"/><path d="M1.2 12.5 L3 11.8 L3 13.6Z M18.8 12.5 L17 11.8 L17 13.6Z M4.5 21.5 L6.5 21 L5.8 23Z M15.5 21.5 L13.5 21 L14.2 23Z" fill="#E8A88F"/></g><path d="M11.8 12.2 L21.8 17.6 L11.8 23.0 Z" fill="#1F3A24" stroke="#58A85E" stroke-width="1.6" stroke-linejoin="round"/></svg>
<div class="a t" style="left:189.5px;top:495.79px;font-family:'Liberation Sans',sans-serif;font-size:19.5px;line-height:27.3px;color:#DFE1E5;font-weight:normal;letter-spacing:0.57px">go build goroutinepool/md5tool</div>
<svg class="a" style="left:489px;top:503px;" width="16" height="16" viewBox="0 0 16 16"><path d="M2.5 2.5 L13 13 M13 2.5 L2.5 13" stroke="#8C8F96" stroke-width="1.6" stroke-linecap="round"/></svg>
<div class="a" style="left:141px;top:535px;width:378px;height:5px;background:#3574F0;border-radius:2.5px"></div>
<svg class="a" style="left:2423px;top:497.4px;" width="12" height="23.200000000000045" viewBox="0 0 12 23.200000000000045"><circle cx="6" cy="4.0" r="1.9" fill="#DFE1E5"/><circle cx="6" cy="11.6" r="1.9" fill="#DFE1E5"/><circle cx="6" cy="19.2" r="1.9" fill="#DFE1E5"/></svg>
<div class="a" style="left:2458px;top:508px;width:20px;height:2.2px;background:#DFE1E5;"></div>
<svg class="a" style="left:78px;top:552px;" width="30" height="30" viewBox="0 0 30 30"><path d="M20 5.5 C18 4 16 3.6 13.5 3.6 C7.8 3.6 3.5 8 3.5 13.5 C3.5 19 7.8 23.4 13.5 23.4" fill="none" stroke="#CED0D6" stroke-width="2"/><path d="M13.5 1 L21.5 4 V10" fill="none" stroke="#CED0D6" stroke-width="2"/><path d="M15 15 L25 20.5 L15 26 Z" fill="#1F3A24" stroke="#5FB865" stroke-width="2" stroke-linejoin="round"/></svg>
<div class="a" style="left:122px;top:557px;width:18px;height:18px;background:#5B5C60;border-radius:3px"></div>
<div class="a" style="left:155.5px;top:551px;width:1.5px;height:29px;background:#393B40;"></div>
<svg class="a" style="left:175px;top:554px;" width="12" height="24.5" viewBox="0 0 12 24.5"><circle cx="6" cy="4.0" r="1.9" fill="#DFE1E5"/><circle cx="6" cy="12.3" r="1.9" fill="#DFE1E5"/><circle cx="6" cy="20.5" r="1.9" fill="#DFE1E5"/></svg>
<svg class="a" style="left:80px;top:608px;" width="22" height="24" viewBox="0 0 22 24"><path d="M11 20.5 V3.5 M4.8 9.8 L11 3.5 L17.2 9.8" fill="none" stroke="#52555B" stroke-width="1.8" stroke-linecap="round" stroke-linejoin="round"/></svg>
<svg class="a" style="left:80px;top:648px;" width="22" height="24" viewBox="0 0 22 24"><path d="M11 3.5 V20.5 M4.8 14.2 L11 20.5 L17.2 14.2" fill="none" stroke="#52555B" stroke-width="1.8" stroke-linecap="round" stroke-linejoin="round"/></svg>
<svg class="a" style="left:79px;top:688px;" width="26" height="24" viewBox="0 0 26 24"><g fill="none" stroke="#CED0D6" stroke-width="2"><path d="M1.5 3 H23"/><path d="M1.5 10.5 H19 C22 10.5 23.5 12.5 23.5 15 C23.5 17.5 22 19.5 19 19.5 H12"/><path d="M15 16.5 L12 19.5 L15 22.5"/><path d="M1.5 18.5 H7"/></g></svg>
<svg class="a" style="left:79px;top:726px;" width="26" height="24" viewBox="0 0 26 24"><g fill="none" stroke="#CED0D6" stroke-width="2"><path d="M2 4 H8.5 M2 11 H8.5 M2 18.2 H23"/><path d="M17 2 V15 M12 10 L17 15 L22 10"/></g></svg>
<svg class="a" style="left:79px;top:766px;" width="26" height="22" viewBox="0 0 26 22"><g fill="none" stroke="#CED0D6" stroke-width="2"><path d="M6 7 V2 H18 V7"/><path d="M6 16.5 H3.5 C2.5 16.5 1.5 15.5 1.5 14.5 V9 C1.5 8 2.5 7 3.5 7 H20.5 C21.5 7 22.5 8 22.5 9 V14.5 C22.5 15.5 21.5 16.5 20.5 16.5 H18"/><path d="M6 12.5 H18 V19.5 H6 Z"/></g></svg>
<svg class="a" style="left:80px;top:803px;" width="22" height="24" viewBox="0 0 22 24"><g fill="none" stroke="#CED0D6" stroke-width="2"><path d="M1.5 5 H20.5 M7.5 5 V2.5 C7.5 1.8 8 1.5 8.5 1.5 H13.5 C14 1.5 14.5 1.8 14.5 2.5 V5"/><path d="M3.5 5 V20.5 C3.5 21.5 4.5 22.5 5.5 22.5 H16.5 C17.5 22.5 18.5 21.5 18.5 20.5 V5"/><path d="M8.5 10 V17.5 M13.5 10 V17.5"/></g></svg>
<svg class="a" style="left:20px;top:1340px;" width="14" height="14" viewBox="0 0 14 14"><rect x="1.5" y="1.5" width="11" height="11" rx="2.5" fill="#1A2F88" stroke="#6E8BEA" stroke-width="1.8"/></svg>
<div class="a t" style="left:40px;top:1332.39px;font-family:'Liberation Sans',sans-serif;font-size:19.5px;line-height:27.3px;color:#A8ABB0;font-weight:normal;letter-spacing:0.3px">goroutinepool</div>
<svg class="a" style="left:177px;top:1339.5px;" width="10" height="14" viewBox="0 0 10 14"><path d="M2 2 L8 7 L2 12" fill="none" stroke="#A8ABB0" stroke-width="1.7" stroke-linecap="round" stroke-linejoin="round"/></svg>
<div class="a t" style="left:199.5px;top:1332.39px;font-family:'Liberation Sans',sans-serif;font-size:19.5px;line-height:27.3px;color:#A8ABB0;font-weight:normal;letter-spacing:0.7px">md5tool</div>
<svg class="a" style="left:288px;top:1339.5px;" width="10" height="14" viewBox="0 0 10 14"><path d="M2 2 L8 7 L2 12" fill="none" stroke="#A8ABB0" stroke-width="1.7" stroke-linecap="round" stroke-linejoin="round"/></svg>
<svg class="a" style="left:313px;top:1335px;" width="30" height="30" viewBox="0 0 30 30"><g transform="scale(1.0)"><path d="M3 3.5 L2.5 1.2 L6 2.6 Z M17 3.5 L17.5 1.2 L14 2.6 Z" fill="#5E8CF0"/><path d="M2.8 5 C2.8 1.8 6 1.5 10 1.5 C14 1.5 17.2 1.8 17.2 5 L17.5 16 C17.5 20.5 14 22 10 22 C6 22 2.5 20.5 2.5 16 Z" fill="#5E8CF0"/><circle cx="6.6" cy="6.3" r="2.9" fill="#fff"/><circle cx="13.4" cy="6.3" r="2.9" fill="#fff"/><circle cx="6.6" cy="6.3" r="1.3" fill="#1E1F22"/><circle cx="13.4" cy="6.3" r="1.3" fill="#1E1F22"/><ellipse cx="10" cy="10" rx="1.6" ry="1.1" fill="#1E1F22"/><path d="M8.8 11 H11.2 V12.6 H8.8Z" fill="#fff"/><path d="M1.2 12.5 L3 11.8 L3 13.6Z M18.8 12.5 L17 11.8 L17 13.6Z M4.5 21.5 L6.5 21 L5.8 23Z M15.5 21.5 L13.5 21 L14.2 23Z" fill="#E8A88F"/></g></svg>
<div class="a t" style="left:342px;top:1332.39px;font-family:'Liberation Sans',sans-serif;font-size:19.5px;line-height:27.3px;color:#A8ABB0;font-weight:normal;">main.go</div>
<div class="a t" style="left:1802.5px;top:1332.59px;font-family:'Liberation Sans',sans-serif;font-size:19.5px;line-height:27.3px;color:#A8ABB0;font-weight:normal;letter-spacing:-0.27px">(D) ↑2.82 kB/s / ↓7.09 kB/s</div>
<div class="a t" style="left:2052px;top:1332.59px;font-family:'Liberation Sans',sans-serif;font-size:19.5px;line-height:27.3px;color:#A8ABB0;font-weight:normal;letter-spacing:-0.2px">159:6 (2773 chars, 160 line breaks)</div>
<div class="a t" style="left:2374.5px;top:1332.59px;font-family:'Liberation Sans',sans-serif;font-size:19.5px;line-height:27.3px;color:#A8ABB0;font-weight:normal;letter-spacing:-3px">LF</div>
<div class="a t" style="left:2416.5px;top:1332.59px;font-family:'Liberation Sans',sans-serif;font-size:19.5px;line-height:27.3px;color:#A8ABB0;font-weight:normal;letter-spacing:-0.65px">UTF-8</div>
<div class="a t" style="left:2502px;top:1332.59px;font-family:'Liberation Sans',sans-serif;font-size:19.5px;line-height:27.3px;color:#A8ABB0;font-weight:normal;">Tab</div>
</body></html>
